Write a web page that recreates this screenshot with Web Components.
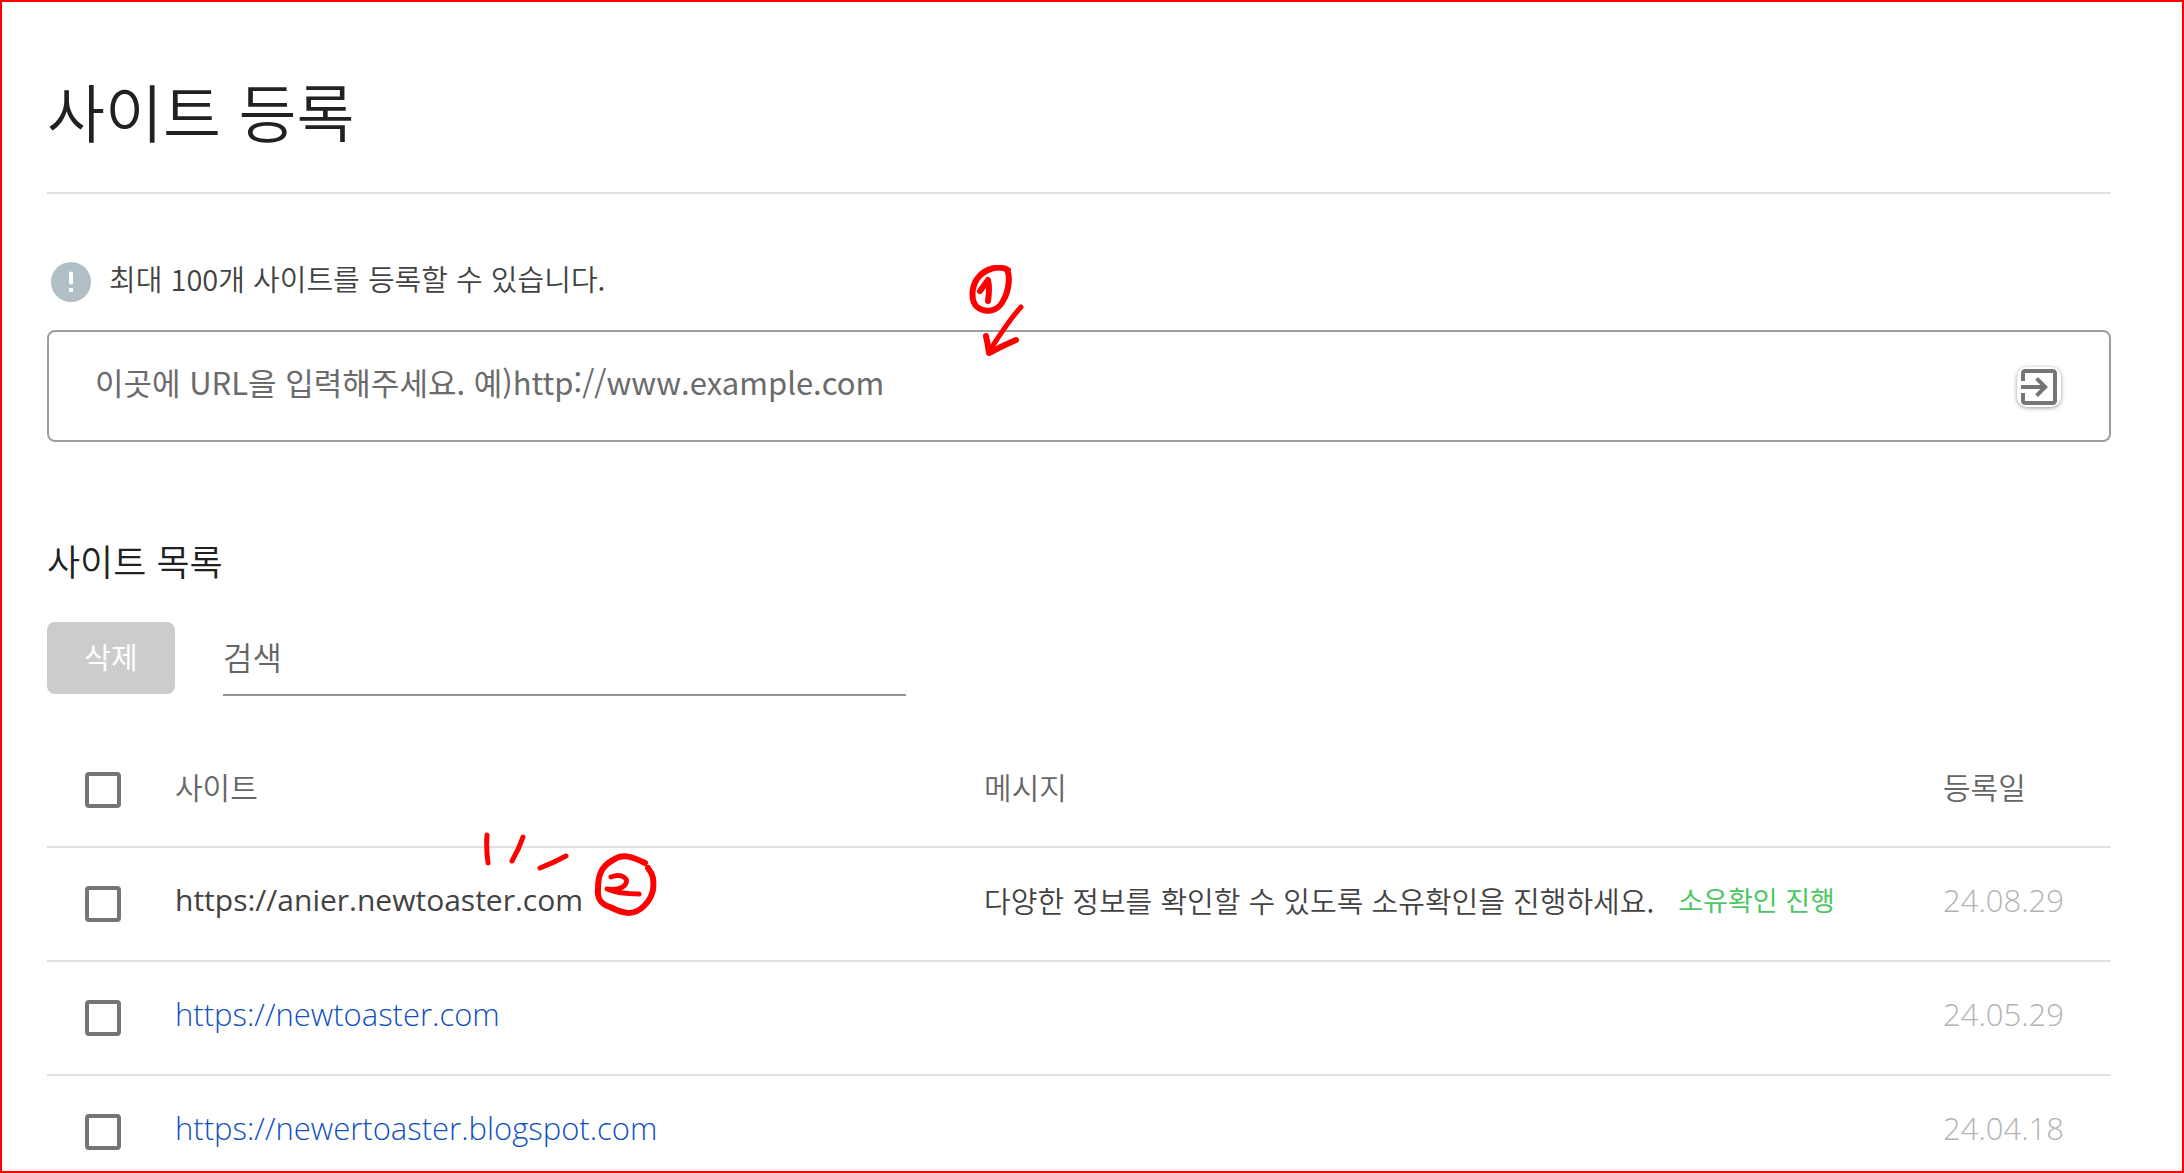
<!DOCTYPE html>
<html lang="ko">
<head>
<meta charset="utf-8">
<meta name="viewport" content="width=device-width, initial-scale=1">
<title>사이트 등록</title>
<style>
    body {
        --latin: "Open Sans", "Noto Sans CJK KR", sans-serif;
        margin: 0;
        background: #fff;
        color: #424242;
        font-family: "Noto Sans CJK KR", sans-serif;
        font-weight: 350;
    }
</style>
</head>
<body>

<site-page>
    <page-title slot="title">사이트 등록</page-title>
    <notice-line>최대 100개 사이트를 등록할 수 있습니다.</notice-line>
    <url-field placeholder="이곳에 URL을 입력해주세요. 예)http://www.example.com">
        <ink-mark name="one"></ink-mark>
    </url-field>
    <site-list heading="사이트 목록"></site-list>
</site-page>

<script>
class SitePage extends HTMLElement {
    connectedCallback() {
        this.attachShadow({mode: "open"}).innerHTML = /*html*/`
        <style>
            :host {
                display: block;
                box-sizing: border-box;
                height: 100vh;
                border: 2px solid #ff0000;
                overflow: auto;
                scrollbar-width: none;
            }
            main {
                display: flex;
                flex-direction: column;
                padding: 60px 71px 0 45px;
            }
        </style>
        <main>
            <slot name="title"></slot>
            <slot></slot>
        </main>`;
    }
}

class PageTitle extends HTMLElement {
    connectedCallback() {
        this.attachShadow({mode: "open"}).innerHTML = /*html*/`
        <style>
            :host {
                display: block;
                padding-bottom: 34px;
                border-bottom: 2px solid #e0e0e0;
            }
            h1 {
                margin: 0;
                color: #212121;
                font-size: 63px;
                line-height: 96px;
                font-weight: inherit;
            }
        </style>
        <h1><slot></slot></h1>`;
    }
}

class NoticeLine extends HTMLElement {
    connectedCallback() {
        this.attachShadow({mode: "open"}).innerHTML = /*html*/`
        <style>
            :host {
                display: flex;
                align-items: center;
                gap: 14px;
                padding: 64px 0 24px;
                font-size: 29px;
                line-height: 40px;
            }
            svg {
                width: 48px;
                height: 48px;
            }
            p {
                margin: 0;
                padding-bottom: 8px;
            }
        </style>
        <svg viewBox="0 0 48 48" aria-hidden="true">
            <circle cx="24" cy="24" r="20" fill="#b0bec5"/>
            <path d="M24 15.5v9" stroke="#fff" stroke-width="4" stroke-linecap="round"/>
            <rect x="22" y="30" width="4" height="4" fill="#fff"/>
        </svg>
        <p><slot></slot></p>`;
    }
}

class UrlField extends HTMLElement {
    connectedCallback() {
        this.attachShadow({mode: "open"}).innerHTML = /*html*/`
        <style>
            :host {
                display: block;
                position: relative;
            }
            form {
                display: flex;
                align-items: center;
                box-sizing: border-box;
                height: 112px;
                padding: 2px 48px 0 46px;
                border: 2px solid #9e9e9e;
                border-radius: 8px;
            }
            input {
                flex: 1;
                min-width: 0;
                padding: 0 0 10px;
                border: 0;
                outline: 0;
                background: none;
                color: #424242;
                font: inherit;
                font-size: 31px;
                font-weight: 400;
                line-height: 48px;
            }
            input::placeholder {
                color: #6b6b6b;
                opacity: 1;
            }
            button {
                display: flex;
                padding: 2px 4px;
                border: 0;
                border-radius: 10px;
                background: #fff;
                box-shadow: 0 1px 4px rgba(0, 0, 0, .4);
            }
            svg {
                width: 36px;
                height: 36px;
            }
            .marks {
                position: absolute;
                left: 44.6%;
                top: -65px;
                pointer-events: none;
            }
        </style>
        <form>
            <input type="text" aria-label="URL" placeholder="${this.getAttribute("placeholder")}">
            <button type="button" aria-label="Submit">
                <svg viewBox="3 3 18 18" fill="#757575" aria-hidden="true">
                    <path d="M10.09 15.59L11.5 17l5-5-5-5-1.41 1.41L12.67 11H3v2h9.67l-2.58 2.59zM19 3H5c-1.11 0-2 .9-2 2v4h2V5h14v14H5v-4H3v4c0 1.1.89 2 2 2h14c1.1 0 2-.9 2-2V5c0-1.1-.9-2-2-2z"/>
                </svg>
            </button>
        </form>
        <div class="marks"><slot></slot></div>`;
    }
}

// hand drawn red marks laid over the page
const INK = {
    one: {
        width: 60,
        height: 94,
        paths: `
            <path stroke-width="6" d="M40 5C31 0 17 3 9 14C3 23 3 36 9 42C18 49 30 46 35 36C41 26 43 9 38 4"/>
            <path stroke-width="6" d="M12 26L20 15Q22 23 20 36"/>
            <path stroke-width="5" d="M53 42C42 54 35 65 22 85"/>
            <path stroke-width="6" d="M18 71Q20 80 21 88Q34 81 48 75"/>`
    },
    two: {
        width: 180,
        height: 90,
        paths: `
            <path stroke-width="5" d="M8 6Q7 20 9 34M44 8Q40 20 33 32M61 39Q74 34 87 27"/>
            <path stroke-width="6" d="M166 34C154 28 144 24 134 31C121 38 119 48 119 60C118 70 122 75 131 78C143 84 154 88 165 77C175 67 175 58 174 49Q173 44 169 39"/>
            <path stroke-width="5" d="M132 48C143 44 151 50 146 56Q140 62 128 60Q140 65 160 65"/>`
    }
};

class InkMark extends HTMLElement {
    connectedCallback() {
        const ink = INK[this.getAttribute("name")];
        this.attachShadow({mode: "open"}).innerHTML = /*html*/`
        <style>
            :host {
                display: block;
                pointer-events: none;
            }
            svg {
                display: block;
            }
        </style>
        <svg width="${ink.width}" height="${ink.height}" fill="none" stroke="#ff0000"
            stroke-linecap="round" stroke-linejoin="round" aria-hidden="true">${ink.paths}</svg>`;
    }
}

class SiteList extends HTMLElement {
    sites = [
        {
            url: "https://anier.newtoaster.com",
            message: "다양한 정보를 확인할 수 있도록 소유확인을 진행하세요.",
            action: "소유확인 진행",
            date: "24.08.29"
        },
        {url: "https://newtoaster.com", verified: true, date: "24.05.29"},
        {url: "https://newertoaster.blogspot.com", verified: true, date: "24.04.18"}
    ];

    connectedCallback() {
        this.attachShadow({mode: "open"}).innerHTML = /*html*/`
        <style>
            :host {
                display: block;
                padding-top: 90px;
            }
            h2 {
                margin: 0;
                color: #212121;
                font-size: 36px;
                line-height: 56px;
                font-weight: inherit;
            }
            .tools {
                display: flex;
                gap: 48px;
                padding: 34px 0 38px;
            }
            .tools button {
                width: 128px;
                height: 72px;
                padding: 0 0 4px;
                border: 0;
                border-radius: 8px;
                background: #ccc;
                color: #fff;
                font: inherit;
                font-size: 29px;
                font-weight: 400;
            }
            .tools input {
                width: 33.1%;
                box-sizing: border-box;
                height: 74px;
                padding: 0 0 4px;
                border: 0;
                border-bottom: 2px solid #949494;
                border-radius: 0;
                outline: 0;
                font: inherit;
                font-size: 32px;
            }
            .tools input::placeholder {
                color: #666;
                opacity: 1;
            }
            table {
                width: 100%;
                table-layout: fixed;
                border-collapse: separate;
                border-spacing: 0;
                font-size: 30px;
                line-height: 44px;
            }
            th, td {
                height: 112px;
                padding: 0;
                border-bottom: 2px solid #e0e0e0;
                text-align: left;
                font-weight: inherit;
                white-space: nowrap;
            }
            th {
                color: #666;
            }
            .check {
                width: 128px;
            }
            .site {
                width: 39.2%;
            }
            .date {
                width: 168px;
            }
            td.site, td.date {
                font-family: var(--latin);
                font-size: 31px;
            }
            td.date {
                color: #b3b3b3;
                font-weight: 300;
            }
            .text {
                display: flex;
                align-items: center;
                padding-bottom: 8px;
            }
            .check input {
                display: block;
                appearance: none;
                box-sizing: border-box;
                width: 36px;
                height: 36px;
                margin: 0 0 0 38px;
                border: 4px solid #757575;
                border-radius: 4px;
            }
            .check input:checked {
                background: #757575;
            }
            a {
                color: #1250c0;
                text-decoration: none;
            }
            .message {
                font-size: 29px;
            }
            a.action {
                margin-left: 24px;
                color: #4cc764;
                font-size: 27px;
                font-weight: 400;
            }
            .mark {
                position: relative;
                font-size: 30px;
                font-weight: 400;
            }
            ink-mark {
                position: absolute;
                right: -76px;
                bottom: 3px;
            }
        </style>
        <h2>${this.getAttribute("heading")}</h2>
        <div class="tools">
            <button type="button">삭제</button>
            <input type="text" aria-label="검색" placeholder="검색">
        </div>
        <table>
            <thead>
                <tr>
                    <th class="check"><input type="checkbox" aria-label="전체 선택"></th>
                    <th class="site"><div class="text">사이트</div></th>
                    <th><div class="text">메시지</div></th>
                    <th class="date"><div class="text">등록일</div></th>
                </tr>
            </thead>
            <tbody>${this.sites.map(site => this.row(site)).join("")}</tbody>
        </table>`;
    }

    row(site) {
        const url = site.verified
            ? `<a href="${site.url}">${site.url}</a>`
            : `<span class="mark">${site.url}<ink-mark name="two"></ink-mark></span>`;
        const message = site.message
            ? `<span class="message">${site.message}</span><a class="action" href="#verify">${site.action}</a>`
            : "";
        return /*html*/`
        <tr>
            <td class="check"><input type="checkbox" aria-label="${site.url}"></td>
            <td class="site"><div class="text">${url}</div></td>
            <td><div class="text">${message}</div></td>
            <td class="date"><div class="text">${site.date}</div></td>
        </tr>`;
    }
}

customElements.define("site-page", SitePage);
customElements.define("page-title", PageTitle);
customElements.define("notice-line", NoticeLine);
customElements.define("ink-mark", InkMark);
customElements.define("url-field", UrlField);
customElements.define("site-list", SiteList);
</script>
</body>
</html>
